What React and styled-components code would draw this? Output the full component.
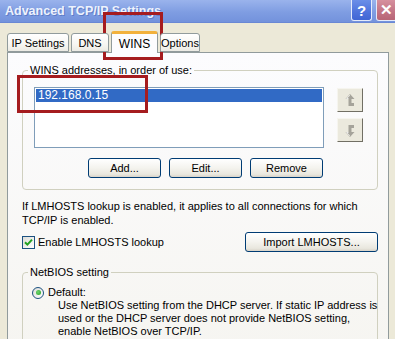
import React from 'react';
import styled, { createGlobalStyle } from 'styled-components';

const GlobalStyle = createGlobalStyle`
  html, body {
    margin: 0;
    padding: 0;
    background: #ece9d8;
  }
  body {
    font-family: "Liberation Sans", Arial, sans-serif;
    font-size: 11px;
    color: #000;
  }
`;

const Window = styled.div`
  position: relative;
  width: 395px;
  height: 339px;
  overflow: hidden;
  background: #ece9d8;
  display: flex;
  flex-direction: column;
`;

const TitleBar = styled.div`
  height: 23px;
  flex: none;
  display: flex;
  justify-content: space-between;
  align-items: flex-start;
  padding-left: 5px;
  background: linear-gradient(180deg, #9ab3ec 0%, #7f9de2 55%, #7392dc 100%);
  border-bottom: 1px solid #6a88d4;
  box-sizing: border-box;
`;

const Title = styled.span`
  margin-top: 4px;
  font-size: 12.5px;
  font-weight: 700;
  color: #eef3fd;
  text-shadow: 1px 1px 0 #5e7cc8;
`;

const Caption = styled.div`
  display: flex;
  gap: 4px;
  margin-right: -2px;
`;

const CaptionButton = styled.div`
  width: 21px;
  height: 21px;
  box-sizing: border-box;
  border: 1px solid #e4ebfb;
  border-top: none;
  border-radius: 0 0 3px 3px;
  display: flex;
  align-items: center;
  justify-content: center;
  color: #fff;
  font-weight: 700;
  font-size: 15px;
  background: ${p => (p.$close
    ? 'linear-gradient(180deg, #d6909e, #c27384 60%, #b76576)'
    : 'linear-gradient(180deg, #6b8fe8, #4e73dc 60%, #4066d4)')};
`;

const Body = styled.div`
  flex: 1;
  display: flex;
  flex-direction: column;
  padding: 0 6px 0 7px;
`;

const TabStrip = styled.div`
  height: 29px;
  display: flex;
  align-items: flex-end;
  gap: 2px;
  position: relative;
  z-index: 1;
`;

const Tab = styled.div`
  width: ${p => p.$w}px;
  height: ${p => (p.$active ? '22px' : '19px')};
  margin-bottom: ${p => (p.$active ? '-1px' : '0')};
  box-sizing: border-box;
  display: flex;
  align-items: center;
  justify-content: center;
  border: 1px solid #919b9c;
  border-bottom: ${p => (p.$active ? 'none' : '1px solid #919b9c')};
  border-top: ${p => (p.$active ? '3px solid #f2b13c' : '1px solid #919b9c')};
  border-radius: 3px 3px 0 0;
  font-size: ${p => (p.$active ? '12px' : '11px')};
  background: ${p => (p.$active
    ? '#fcfcfe'
    : 'linear-gradient(180deg, #ffffff 0%, #f7f6f2 60%, #ecebe4 100%)')};
`;

const Panel = styled.div`
  flex: 1;
  border: 1px solid #919b9c;
  border-bottom: none;
  background: linear-gradient(180deg, #fcfcfe 0%, #f6f5f1 100%);
  padding: 11px 10px 0 14px;
  display: flex;
  flex-direction: column;
`;

const Group = styled.fieldset`
  margin: ${p => p.$top || 0}px 0 0;
  padding: 0;
  border: 1px solid #d0d0bf;
  border-radius: 4px;
  min-width: 0;
`;

const Legend = styled.legend`
  margin-left: 5px;
  padding: 0 2px;
  line-height: 13px;
`;

const GroupInner = styled.div`
  display: flex;
  flex-direction: column;
  padding: ${p => p.$pad};
`;

const ListRow = styled.div`
  display: flex;
  gap: 13px;
  align-items: flex-start;
`;

const ListBox = styled.div`
  width: 290px;
  height: 61px;
  box-sizing: border-box;
  border: 1px solid #7f9db9;
  background: #fff;
  padding: 1px;
`;

const ListItem = styled.div`
  height: 13px;
  line-height: 13px;
  padding-left: 2px;
  background: ${p => (p.$selected ? '#316ac5' : 'transparent')};
  color: ${p => (p.$selected ? '#fff' : '#000')};
  font-size: 12px;
`;

const MoveColumn = styled.div`
  display: flex;
  flex-direction: column;
  gap: 6px;
  padding-top: 1px;
`;

const MoveButton = styled.div`
  width: 26px;
  height: 24px;
  box-sizing: border-box;
  background: #ebe9dd;
  border-top: 1px solid #f6f5ef;
  border-left: 1px solid #f6f5ef;
  border-right: 1px solid #716f64;
  border-bottom: 1px solid #716f64;
  display: flex;
  align-items: center;
  justify-content: center;
`;

const ButtonRow = styled.div`
  display: flex;
  gap: 8px;
  width: 290px;
  justify-content: flex-end;
  padding-top: 10px;
  padding-right: 1px;
  box-sizing: border-box;
`;

const Button = styled.div`
  width: ${p => p.$w}px;
  height: 20px;
  box-sizing: border-box;
  border: 1px solid #003c74;
  border-radius: 3px;
  background: linear-gradient(180deg, #ffffff 0%, #f4f3ee 50%, #e9e7de 85%, #d8d3c8 100%);
  display: flex;
  align-items: center;
  justify-content: center;
`;

const Paragraph = styled.div`
  margin-top: 9px;
  line-height: 14px;
  white-space: nowrap;
`;

const OptionRow = styled.div`
  margin-top: 5px;
  display: flex;
  justify-content: space-between;
  align-items: center;
`;

const CheckLabel = styled.label`
  display: flex;
  align-items: center;
  gap: 3px;
`;

const CheckBox = styled.span`
  width: 13px;
  height: 13px;
  box-sizing: border-box;
  border: 1px solid #1c5180;
  background: linear-gradient(135deg, #dcdcd7, #ffffff);
  display: flex;
  align-items: center;
  justify-content: center;
`;

const RadioRow = styled.div`
  display: flex;
  align-items: center;
  gap: 4px;
  line-height: 13px;
`;

const Radio = styled.span`
  width: 12px;
  height: 12px;
  box-sizing: border-box;
  border-radius: 50%;
  border: 1px solid #1c5180;
  background: linear-gradient(135deg, #dcdcd7, #ffffff);
  display: flex;
  align-items: center;
  justify-content: center;
  &::after {
    content: '';
    width: 5px;
    height: 5px;
    border-radius: 50%;
    background: radial-gradient(circle at 40% 40%, #6fd36f, #21a121);
  }
`;

const Description = styled.div`
  padding-left: 26px;
  line-height: 13px;
  white-space: nowrap;
`;

const Highlight = styled.div`
  position: absolute;
  box-sizing: border-box;
  border: 3px solid #a51c1f;
  pointer-events: none;
  left: ${p => p.$x}px;
  top: ${p => p.$y}px;
  width: ${p => p.$w}px;
  height: ${p => p.$h}px;
`;

const ArrowIcon = ({ down }) => (
  <svg width="10" height="13" viewBox="0 0 10 13" style={down ? { transform: 'scaleY(-1)' } : undefined}>
    <path d="M5 0 L9.5 5 L6.5 5 L6.5 9 L9 9 L9 12 L3.5 12 L3.5 5 L0.5 5 Z" fill="#a5a39a" />
    <path d="M5 1.2 L1.6 4.5 L3.5 4.5" fill="none" stroke="#fdfdfb" strokeWidth="0.8" />
  </svg>
);

const CheckMark = () => (
  <svg width="9" height="9" viewBox="0 0 9 9">
    <path d="M1 4.2 L3.4 6.6 L8 1.6" fill="none" stroke="#21a121" strokeWidth="2" />
  </svg>
);

const tabs = [
  { label: 'IP Settings', w: 62 },
  { label: 'DNS', w: 38 },
  { label: 'WINS', w: 47 },
  { label: 'Options', w: 40 },
];

const App = () => (
  <Window>
    <GlobalStyle />
    <TitleBar>
      <Title>Advanced TCP/IP Settings</Title>
      <Caption>
        <CaptionButton>?</CaptionButton>
        <CaptionButton $close>✕</CaptionButton>
      </Caption>
    </TitleBar>
    <Body>
      <TabStrip>
        {tabs.map(t => (
          <Tab key={t.label} $w={t.w} $active={t.label === 'WINS'}>{t.label}</Tab>
        ))}
      </TabStrip>
      <Panel>
        <Group>
          <Legend>WINS addresses, in order of use:</Legend>
          <GroupInner $pad="10px 10px 11px 11px">
            <ListRow>
              <ListBox>
                <ListItem $selected>192.168.0.15</ListItem>
              </ListBox>
              <MoveColumn>
                <MoveButton><ArrowIcon /></MoveButton>
                <MoveButton><ArrowIcon down /></MoveButton>
              </MoveColumn>
            </ListRow>
            <ButtonRow>
              <Button $w={73}>Add...</Button>
              <Button $w={73}>Edit...</Button>
              <Button $w={73}>Remove</Button>
            </ButtonRow>
          </GroupInner>
        </Group>
        <Paragraph>
          If LMHOSTS lookup is enabled, it applies to all connections for which
          <br />
          TCP/IP is enabled.
        </Paragraph>
        <OptionRow>
          <CheckLabel>
            <CheckBox><CheckMark /></CheckBox>
            Enable LMHOSTS lookup
          </CheckLabel>
          <Button $w={133}>Import LMHOSTS...</Button>
        </OptionRow>
        <Group $top={14}>
          <Legend>NetBIOS setting</Legend>
          <GroupInner $pad="7px 0 10px 9px">
            <RadioRow>
              <Radio />
              Default:
            </RadioRow>
            <Description>
              Use NetBIOS setting from the DHCP server. If static IP address is
              <br />
              used or the DHCP server does not provide NetBIOS setting,
              <br />
              enable NetBIOS over TCP/IP.
            </Description>
          </GroupInner>
        </Group>
      </Panel>
    </Body>
    <Highlight $x={103} $y={12} $w={60} $h={48} />
    <Highlight $x={17} $y={75} $w={131} $h={38} />
  </Window>
);

export default App;
